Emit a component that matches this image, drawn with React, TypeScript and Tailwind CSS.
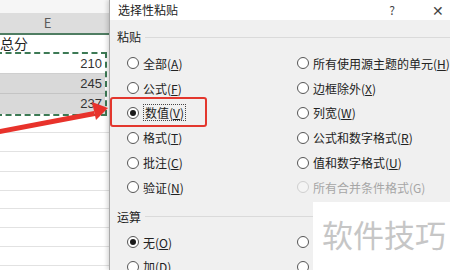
import React from 'react';

type Opt = { label: string; key: string; checked?: boolean; disabled?: boolean; focus?: boolean; hidden?: boolean };

function Radio({ opt }: { opt: Opt }) {
  return (
    <div className="h-[24.8px] flex items-center whitespace-nowrap">
      <span
        className={`w-[12px] h-[12px] rounded-full border flex items-center justify-center shrink-0 ${
          opt.disabled ? 'border-[#cfcfcf] bg-[#f4f4f4]' : 'border-[#555] bg-white'
        }`}
      >
        {opt.checked && <span className="w-[6px] h-[6px] rounded-full bg-[#1a1a1a]" />}
      </span>
      {!opt.hidden && (
        <span
          className={`ml-[4px] leading-[15px] ${opt.disabled ? 'text-[#a6a6a6]' : 'text-[#222]'} ${
            opt.focus ? 'border border-dotted border-[#444] px-[1px]' : ''
          }`}
        >
          {opt.label}(
          {opt.disabled ? opt.key : <span className="underline underline-offset-1">{opt.key}</span>})
        </span>
      )}
    </div>
  );
}

function GroupLabel({ text }: { text: string }) {
  return (
    <div className="h-[18px] flex items-center">
      <span className="text-[#222]">{text}</span>
      <div className="flex-1 h-px bg-[#dadada] ml-[4px]" />
    </div>
  );
}

export default function App() {
  const paste: Opt[] = [
    { label: '全部', key: 'A' },
    { label: '所有使用源主题的单元', key: 'H' },
    { label: '公式', key: 'F' },
    { label: '边框除外', key: 'X' },
    { label: '数值', key: 'V', checked: true, focus: true },
    { label: '列宽', key: 'W' },
    { label: '格式', key: 'T' },
    { label: '公式和数字格式', key: 'R' },
    { label: '批注', key: 'C' },
    { label: '值和数字格式', key: 'U' },
    { label: '验证', key: 'N' },
    { label: '所有合并条件格式', key: 'G', disabled: true },
  ];
  // right-hand labels of this group sit under the watermark
  const ops: Opt[] = [
    { label: '无', key: 'O', checked: true },
    { label: '减', key: 'S', hidden: true },
    { label: '加', key: 'D' },
    { label: '乘', key: 'M', hidden: true },
  ];
  const gridRows = [17, 19, 20, 19, 18, 19, 19, 19];

  return (
    <div
      className="relative w-[450px] h-[270px] overflow-hidden flex bg-white text-[12px]"
      style={{ fontFamily: '"Noto Sans CJK SC", "Liberation Sans", sans-serif' }}
    >
      {/* spreadsheet */}
      <div className="w-[109px] shrink-0 flex flex-col bg-white">
        <div className="h-[13px] bg-[#f6f6f6]" />
        <div className="h-[22px] bg-[#dddddd] border-b-2 border-[#4f7d62] flex items-center justify-center pr-[14px] text-[13px] text-[#5a5a5a]">
          E
        </div>
        <div className="h-[17px] flex items-center text-[14px] text-[#222]">总分</div>
        <div
          className="h-[64px] -ml-[4px] mr-[2px] border-2 border-dashed border-[#3d7a55] flex flex-col text-[13px] text-[#333]"
          style={{ fontFamily: '"Liberation Sans", sans-serif' }}
        >
          <div className="h-[20px] bg-white flex items-center justify-end pr-[3px] border-b border-[#cfcfcf]">210</div>
          <div className="h-[20px] bg-[#d9d9d9] flex items-center justify-end pr-[3px] border-b border-[#c4c4c4]">245</div>
          <div className="flex-1 bg-[#d9d9d9] flex items-center justify-end pr-[3px]">237</div>
        </div>
        {gridRows.map((h, i) => (
          <div key={i} className="border-b border-[#e2e2e2] shrink-0" style={{ height: h }} />
        ))}
      </div>

      {/* dialog */}
      <div className="flex-1 bg-[#f0f0f0] border-l border-[#a9a9a9] shadow-[-2px_0_4px_rgba(0,0,0,0.15)] flex flex-col">
        <div className="h-[20px] bg-white flex items-center pl-[8px] text-[#222]">
          <span>选择性粘贴</span>
          <span className="ml-auto w-[12px] text-center text-[#444] mr-[33px]">?</span>
          <span className="w-[14px] text-center text-[#444] text-[14px] mr-[5px]">✕</span>
        </div>
        <div className="pl-[7px]">
          <div className="mt-[8px]">
            <GroupLabel text="粘贴" />
          </div>
          <div className="grid grid-cols-[170px_1fr] mt-[5px] pl-[10px]">
            {paste.map((o) => (
              <Radio key={o.key} opt={o} />
            ))}
          </div>
          <div className="mt-[8px]">
            <GroupLabel text="运算" />
          </div>
          <div className="grid grid-cols-[170px_1fr] mt-[4px] pl-[10px]">
            {ops.map((o) => (
              <Radio key={o.key} opt={o} />
            ))}
          </div>
        </div>
      </div>

      {/* annotations */}
      <div className="absolute left-[110px] top-[97px] w-[97px] h-[30px] border-2 border-[#e3372e] rounded-[3px]" />
      <svg className="absolute left-0 top-[96px]" width="115" height="40" viewBox="0 0 115 40">
        <polygon points="0,33 94,15 95,20 0,38" fill="#e8322b" />
        <polygon points="108,12 92,6 96,24" fill="#e8322b" />
      </svg>

      {/* watermark */}
      <div className="absolute left-[313px] top-[202px] w-[137px] h-[68px] bg-white flex items-center pl-[9px] pb-[6px]">
        <span className="text-[31px] leading-none text-[#c6c6c6]">软件技巧</span>
      </div>
    </div>
  );
}
